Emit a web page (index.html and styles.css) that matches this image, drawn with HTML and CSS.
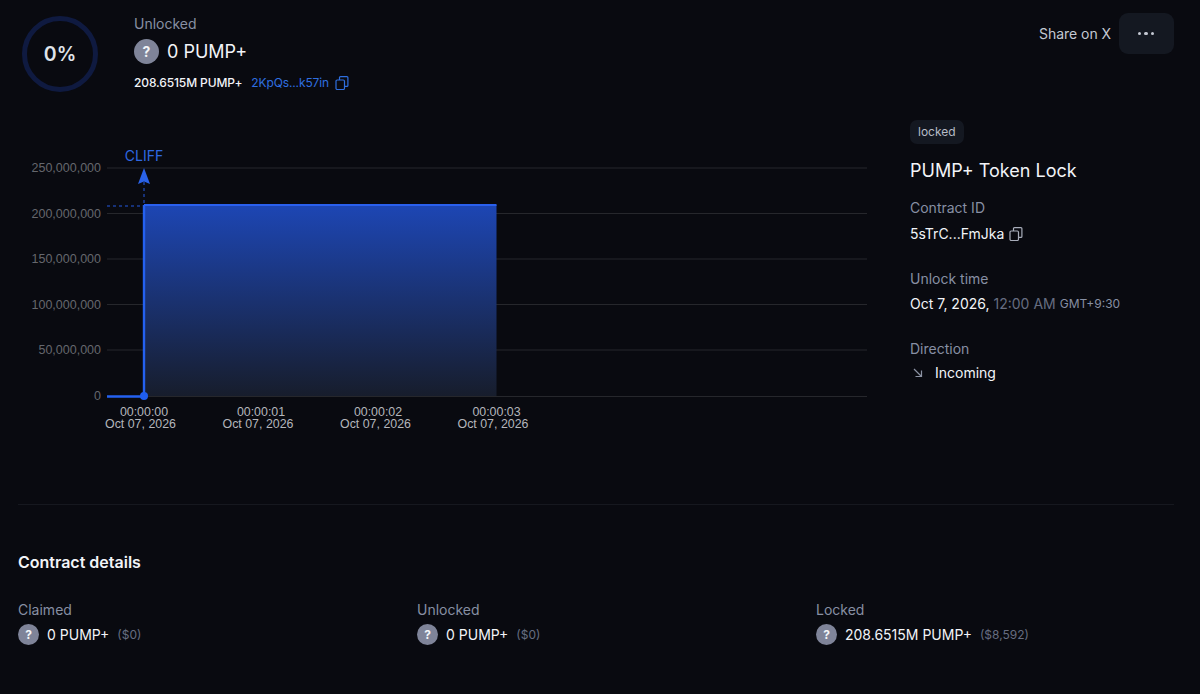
FILE: index.html
```html
<!DOCTYPE html>
<html lang="en">
<head>
  <meta charset="UTF-8">
  <title>PUMP+ Token Lock</title>
  <meta name="viewport" content="width=device-width, initial-scale=1" />
  <link rel="stylesheet" href="styles.css">
</head>
<body>

<header class="top">
  <div class="summary">
    <div class="ring"><span>0%</span></div>
    <div class="summary-text">
      <div class="label">Unlocked</div>
      <div class="amount">
        <span class="coin coin-lg">?</span>
        <span>0 PUMP+</span>
      </div>
      <div class="sub">
        <span>208.6515M PUMP+</span>
        <a href="#" class="link">2KpQs...k57in</a>
        <svg class="copy copy-blue" viewBox="0 0 14 14"><rect x="1" y="4" width="8.5" height="9.5" rx="1.2"/><path d="M4.5 4V1.6q0-1 1-1h6.400q1 0 1 1v7.800q0 1-1 1H9.500"/></svg>
      </div>
    </div>
  </div>
  <div class="actions">
    <a href="#" class="share">Share on X</a>
    <button class="more"><i></i><i></i><i></i></button>
  </div>
</header>

<main class="main">
  <div class="chart-wrap">
    <svg class="chart" viewBox="18 140 860 310">
      <defs>
        <linearGradient id="fill" x1="0" y1="0" x2="0" y2="1">
          <stop offset="0" stop-color="#1d46b4"/>
          <stop offset="1" stop-color="#171d2c"/>
        </linearGradient>
      </defs>
      <g class="grid">
        <line x1="107" x2="867" y1="168" y2="168"/>
        <line x1="107" x2="867" y1="213.500" y2="213.500"/>
        <line x1="107" x2="867" y1="259" y2="259"/>
        <line x1="107" x2="867" y1="304.500" y2="304.500"/>
        <line x1="107" x2="867" y1="350" y2="350"/>
        <line x1="107" x2="867" y1="396.500" y2="396.500"/>
      </g>
      <g class="y-labels">
        <text x="101" y="172">250,000,000</text>
        <text x="101" y="218">200,000,000</text>
        <text x="101" y="263">150,000,000</text>
        <text x="101" y="309">100,000,000</text>
        <text x="101" y="354">50,000,000</text>
        <text x="101" y="400">0</text>
      </g>
      <rect x="144" y="205" width="352.500" height="191" fill="url(#fill)"/>
      <line class="area-top" x1="144" x2="496.500" y1="205" y2="205"/>
      <line class="dash" x1="107" x2="144" y1="206" y2="206"/>
      <line class="dash" x1="144" x2="144" y1="182" y2="205"/>
      <path class="arrow" d="M144 168l6 16-6-2.500-6 2.500z"/>
      <path class="step" d="M107 396.500H144V205"/>
      <circle class="dot" cx="144" cy="396" r="4"/>
      <text class="cliff" x="144" y="160.500">CLIFF</text>
      <g class="x-labels">
        <text y="415.500"><tspan x="144">00:00:00</tspan><tspan x="140.500" dy="12">Oct 07, 2026</tspan></text>
        <text y="415.500"><tspan x="261">00:00:01</tspan><tspan x="258" dy="12">Oct 07, 2026</tspan></text>
        <text y="415.500"><tspan x="378">00:00:02</tspan><tspan x="375.500" dy="12">Oct 07, 2026</tspan></text>
        <text y="415.500"><tspan x="496.500">00:00:03</tspan><tspan x="493" dy="12">Oct 07, 2026</tspan></text>
      </g>
    </svg>
  </div>

  <aside class="side">
    <span class="badge">locked</span>
    <h1 class="title">PUMP+ Token Lock</h1>
    <div class="field">
      <div class="label">Contract ID</div>
      <div class="value">
        <span>5sTrC...FmJka</span>
        <svg class="copy copy-side" viewBox="0 0 14 14"><rect x="1" y="4" width="8.5" height="9.500" rx="1.200"/><path d="M4.500 4V1.600q0-1 1-1h6.400q1 0 1 1v7.800q0 1-1 1H9.500"/></svg>
      </div>
    </div>
    <div class="field">
      <div class="label">Unlock time</div>
      <div class="value">
        <span>Oct 7, 2026,</span>
        <span class="muted">12:00 AM</span>
        <span class="muted small">GMT+9:30</span>
      </div>
    </div>
    <div class="field">
      <div class="label">Direction</div>
      <div class="value direction">
        <svg class="dir-icon" viewBox="0 0 10 10"><path d="M1 1l7.500 7.500M8.500 2.500v6h-6"/></svg>
        <span>Incoming</span>
      </div>
    </div>
  </aside>
</main>

<section class="details">
  <h2>Contract details</h2>
  <div class="details-grid">
    <div class="detail">
      <div class="label">Claimed</div>
      <div class="detail-value">
        <span class="coin">?</span>
        <span>0 PUMP+</span>
        <span class="usd">($0)</span>
      </div>
    </div>
    <div class="detail">
      <div class="label">Unlocked</div>
      <div class="detail-value">
        <span class="coin">?</span>
        <span>0 PUMP+</span>
        <span class="usd">($0)</span>
      </div>
    </div>
    <div class="detail">
      <div class="label">Locked</div>
      <div class="detail-value">
        <span class="coin">?</span>
        <span>208.6515M PUMP+</span>
        <span class="usd">($8,592)</span>
      </div>
    </div>
  </div>
</section>

</body>
</html>
```

FILE: styles.css
```css
body {
  margin: 0;
  height: 694px;
  overflow: hidden;
  padding: 0 26px 0 18px;
  box-sizing: border-box;
  background: #090a10;
  color: #f2f4f8;
  font-family: Inter, 'Liberation Sans', sans-serif;
  font-size: 14px;
}
a {
  text-decoration: none;
}
.label {
  color: #878fa3;
  font-size: 14px;
  line-height: 20px;
}
.top {
  display: flex;
  justify-content: space-between;
  height: 127px;
  padding-top: 13px;
  box-sizing: border-box;
}
.summary {
  display: flex;
  gap: 36px;
  padding-left: 4px;
}
.summary-text {
  padding-top: 1px;
}
.ring {
  width: 76px;
  height: 76px;
  margin-top: 3px;
  box-sizing: border-box;
  border: 5px solid #0f1a40;
  border-radius: 50%;
  display: flex;
  align-items: center;
  justify-content: center;
  color: #dfe3ea;
  font-size: 19.500px;
  font-weight: 600;
}
.amount {
  display: flex;
  align-items: center;
  gap: 8px;
  margin-top: 5px;
  font-size: 18px;
  line-height: 25px;
}
.coin {
  width: 21px;
  height: 21px;
  border-radius: 50%;
  background: #7f8499;
  color: #f2f4f8;
  font-size: 12px;
  font-weight: 700;
  display: flex;
  align-items: center;
  justify-content: center;
  flex: none;
}
.coin-lg {
  width: 25px;
  height: 25px;
  font-size: 14px;
}
.sub {
  display: flex;
  align-items: center;
  margin-top: 9px;
  font-size: 12px;
  font-weight: 500;
  line-height: 20px;
  letter-spacing: -0.12px;
}
.link {
  color: #2f6fe0;
  font-weight: 400;
  margin-left: 9px;
}
.copy {
  width: 14px;
  height: 14px;
  margin-left: 6px;
  fill: none;
  stroke: #a8adba;
  stroke-width: 1.200;
}
.copy-blue {
  stroke: #2f6fe0;
}
.copy-side {
  margin-left: 1px;
}
.actions {
  display: flex;
  align-items: flex-start;
  gap: 8px;
}
.share {
  color: #c3c8d2;
  font-size: 14px;
  line-height: 41px;
  letter-spacing: -0.05px;
}
.more {
  width: 55px;
  height: 41px;
  border: none;
  border-radius: 9px;
  background: #141821;
  display: flex;
  align-items: center;
  justify-content: center;
  gap: 3px;
  padding: 0 1px 0 0;
}
.more i {
  width: 3.500px;
  height: 3.500px;
  border-radius: 50%;
  background: #c4c8d2;
}
.main {
  display: flex;
  height: 377px;
  border-bottom: 1px solid #16181f;
  box-sizing: content-box;
}
.chart-wrap {
  width: 892px;
  flex: none;
  padding-top: 13px;
}
.chart {
  display: block;
  width: 860px;
  height: 310px;
}
.grid line {
  stroke: #26272c;
  stroke-width: 1;
}
.y-labels text {
  fill: #65676d;
  font-family: 'Liberation Sans', sans-serif;
  font-size: 12.500px;
  text-anchor: end;
}
.x-labels text {
  fill: #b4b6bc;
  font-family: 'Liberation Sans', sans-serif;
  font-size: 12.400px;
  text-anchor: middle;
}
.area-top {
  stroke: #2a60ee;
  stroke-width: 2;
}
.dash {
  stroke: #2559e0;
  stroke-width: 1;
  stroke-dasharray: 3 3;
}
.arrow {
  fill: #2a62e8;
}
.step {
  fill: none;
  stroke: #2461f0;
  stroke-width: 2.400;
}
.dot {
  fill: #1f5ef0;
}
.cliff {
  fill: #2f68e0;
  font-family: Inter, sans-serif;
  font-size: 14px;
  text-anchor: middle;
}
.side {
  flex: 1;
  margin-top: -7px;
}
.badge {
  display: inline-block;
  background: #141821;
  color: #b6bbc7;
  font-size: 12px;
  line-height: 24px;
  padding: 0 8px;
  border-radius: 7px;
}
.title {
  margin: 13px 0 13px;
  font-size: 18px;
  font-weight: 400;
  line-height: 28px;
}
.field {
  margin-bottom: 25px;
}
.value {
  display: flex;
  align-items: center;
  gap: 4px;
  margin-top: 5.500px;
  font-size: 14px;
  line-height: 20px;
}
.muted {
  color: #666d80;
}
.small {
  font-size: 12px;
  color: #878fa3;
}
.direction {
  gap: 12px;
  margin-top: 4px;
}
.dir-icon {
  width: 10px;
  height: 10px;
  margin-left: 3px;
  fill: none;
  stroke: #8b92a3;
  stroke-width: 1.200;
}
.details h2 {
  margin: 46px 0 27px;
  font-size: 16px;
  font-weight: 600;
  line-height: 22px;
}
.details-grid {
  display: grid;
  grid-template-columns: repeat(3, 399px);
}
.detail-value {
  display: flex;
  align-items: center;
  gap: 8px;
  margin-top: 4px;
  font-size: 14px;
  line-height: 21px;
}
.usd {
  color: #666d80;
  font-size: 12px;
}
```
